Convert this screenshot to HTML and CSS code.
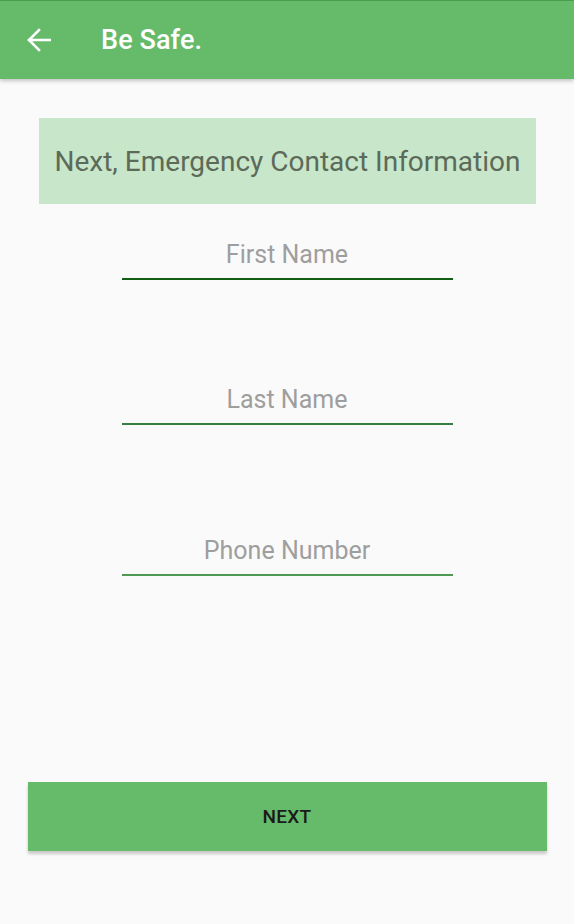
FILE: index.html
```html
<!DOCTYPE html>
<html>
<head>
<meta charset="utf-8">
<link rel="stylesheet" href="styles.css">
</head>
<body>
<header class="appbar">
  <svg class="back" width="24" height="24" viewBox="0 0 24 24" aria-hidden="true">
    <path d="M23 12H2 M12 2L2 12l10 10" fill="none" stroke="#fff" stroke-width="2.6" stroke-linecap="square"/>
  </svg>
  <h1 class="title">Be Safe.</h1>
</header>
<main class="content">
  <div class="banner">Next, Emergency Contact Information</div>
  <div class="field field-first"><span class="placeholder">First Name</span></div>
  <div class="field field-last"><span class="placeholder">Last Name</span></div>
  <div class="field field-phone"><span class="placeholder">Phone Number</span></div>
  <button class="next">NEXT</button>
</main>
</body>
</html>
```

FILE: styles.css
```css
html, body {
  margin: 0;
  padding: 0;
}
body {
  background: #fafafa;
  font-family: Roboto, "Noto Sans", sans-serif;
  width: 574px;
  height: 924px;
  overflow: hidden;
}
.appbar {
  height: 78px;
  border-top: 1px solid #4a9d4e;
  background: #66bb6a;
  display: flex;
  align-items: center;
  padding-left: 27px;
  box-shadow: 0 2px 4px rgba(0,0,0,0.22);
  position: relative;
  z-index: 1;
}
.back {
  display: block;
  margin-top: -1px;
}
.title {
  margin: 0 0 0 50px;
  color: #fff;
  font-size: 27px;
  font-weight: 500;
  letter-spacing: 0.1px;
}
.content {
  display: flex;
  flex-direction: column;
  align-items: center;
  padding-top: 39px;
}
.banner {
  width: 497px;
  height: 86px;
  margin-left: 1px;
  background: #c8e6c9;
  color: #5c6a59;
  font-size: 28px;
  display: flex;
  align-items: center;
  justify-content: center;
}
.field {
  width: 331px;
  margin-left: 0;
  text-align: center;
  font-size: 25px;
  line-height: 30px;
  padding-bottom: 8px;
  border-bottom: 2px solid #1b5e20;
}
.placeholder {
  color: #9e9e9e;
}
.field-first {
  margin-top: 36px;
  border-bottom-color: #0f5e12;
}
.field-last {
  margin-top: 105px;
  border-bottom: 2px solid #3b7c3f;
}
.field-phone {
  margin-top: 111px;
  border-bottom-color: #4f9a52;
}
.next {
  margin-top: 206px;
  width: 519px;
  height: 69px;
  border: none;
  background: #66bb6a;
  color: #1a1a1a;
  font-family: Roboto, "Noto Sans", sans-serif;
  font-size: 19px;
  font-weight: 500;
  letter-spacing: 0.3px;
  box-shadow: 0 3px 3px rgba(0,0,0,0.2);
}
```
